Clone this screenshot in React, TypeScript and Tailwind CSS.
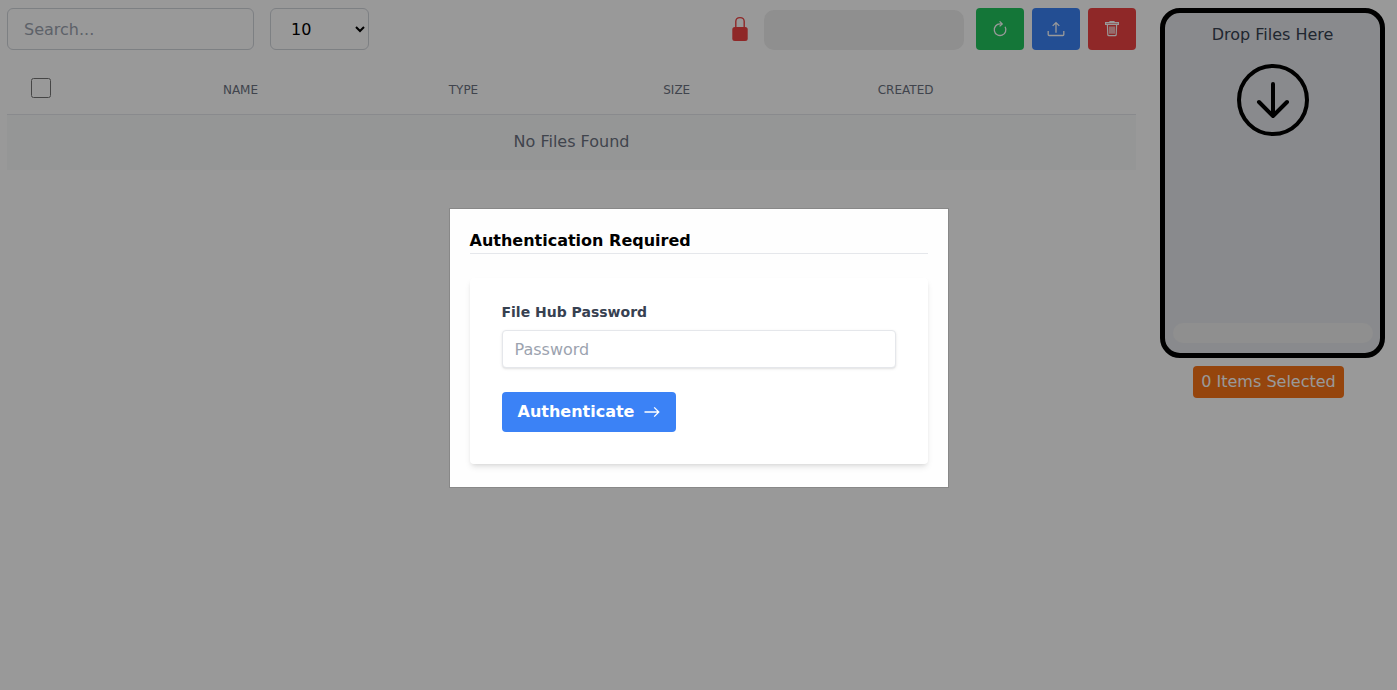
import React from "react";

function LockIcon() {
  return (
    <svg width="16" height="26" viewBox="0 0 16 26" aria-hidden="true">
      <path d="M3.8 11V5.6C3.8 3 5.6 1.6 8 1.6s4.2 1.4 4.2 4V11" fill="none" stroke="#ef4444" strokeWidth="1.4" />
      <rect x="0.3" y="11" width="15.4" height="14" rx="2.5" fill="#ef4444" />
    </svg>
  );
}

function ReloadIcon() {
  return (
    <svg width="16" height="16" viewBox="0 0 16 16" fill="none" stroke="#fff" strokeWidth="1.3" aria-hidden="true">
      <path d="M13.1 5.8A5.8 5.8 0 1 1 8 2.9h2" />
      <path d="M7.6 0.4L10.2 2.9L7.6 5.4" />
    </svg>
  );
}

function UploadIcon() {
  return (
    <svg width="18" height="16" viewBox="0 0 18 16" fill="none" stroke="#fff" strokeWidth="1.3" aria-hidden="true">
      <path d="M1.2 10v3.5q0 1 1 1h13.6q1 0 1-1V10" />
      <path d="M9 11.8V1.8M5.7 4.9L9 1.6l3.3 3.3" />
    </svg>
  );
}

function TrashIcon() {
  return (
    <svg width="16" height="16" viewBox="0 0 16 16" fill="none" stroke="#fff" strokeWidth="1.2" aria-hidden="true">
      <path d="M6 1.6V.6h4v1M1.6 1.6h12.8v1.8H1.6zM3.4 3.4l.4 10.2q.1 1 1 1h6.4q.9 0 1-1l.4-10.2" />
      <path d="M6 5.4v7.4M8 5.4v7.4M10 5.4v7.4" />
    </svg>
  );
}

function ArrowIcon() {
  return (
    <svg width="16" height="12" viewBox="0 0 16 12" fill="none" stroke="#fff" strokeWidth="1.3" aria-hidden="true">
      <path d="M0.5 6h14M10.2 1.4L14.8 6l-4.6 4.6" />
    </svg>
  );
}

function DropIcon() {
  return (
    <svg width="72" height="72" viewBox="0 0 72 72" fill="none" stroke="#000" strokeWidth="4" strokeLinecap="round" aria-hidden="true">
      <circle cx="36" cy="36" r="34" />
      <path d="M36 20v32M22 38l14 14l14-14" strokeLinejoin="round" />
    </svg>
  );
}

const tool = "flex h-[42px] w-12 items-center justify-center rounded";

export default function App() {
  return (
    <div className="min-h-screen bg-white font-['Verdana','DejaVu_Sans',sans-serif] text-base text-black">
      <div className="flex items-start gap-6 py-2 pr-3 pl-[7px]">
        <main className="min-w-0 flex-1">
          <div className="flex items-center">
            <input
              type="search"
              aria-label="Search"
              placeholder="Search..."
              className="h-[42px] w-[247px] rounded-md border border-[#d1d5db] bg-white px-4 placeholder:text-[#9ca3af]"
            />
            <select
              aria-label="Rows per page"
              defaultValue="10"
              className="ml-4 h-[42px] w-[99px] rounded-md border border-[#d1d5db] bg-white pl-4"
            >
              <option>10</option>
              <option>25</option>
              <option>50</option>
            </select>
            <div className="ml-auto flex items-center gap-2">
              <LockIcon />
              <div className="mr-1 ml-2 h-10 w-[200px] self-end rounded-[10px] bg-[#eeeeee]" />
              <button aria-label="Refresh" className={tool + " bg-[#22c55e]"}>
                <ReloadIcon />
              </button>
              <button aria-label="Upload" className={tool + " bg-[#3b82f6]"}>
                <UploadIcon />
              </button>
              <button aria-label="Delete" className={tool + " bg-[#ef4444]"}>
                <TrashIcon />
              </button>
            </div>
          </div>
          <table className="mt-3 w-full table-fixed">
            <thead>
              <tr className="h-[52px] border-b border-[#e5e7eb] text-left text-xs text-[#6b7280]">
                <th className="w-[17%] px-6">
                  <input type="checkbox" aria-label="Select all files" className="block size-5" />
                </th>
                <th className="w-[20%] px-6 pt-1 font-normal">NAME</th>
                <th className="w-[19%] px-6 pt-1 font-normal">TYPE</th>
                <th className="w-[19%] px-6 pt-1 font-normal">SIZE</th>
                <th className="px-6 pt-1 font-normal">CREATED</th>
              </tr>
            </thead>
            <tbody>
              <tr className="h-14 bg-[#f9fafb]">
                <td colSpan={5} className="text-center text-[#6b7280]">
                  No Files Found
                </td>
              </tr>
            </tbody>
          </table>
        </main>
        <aside className="flex w-[225px] shrink-0 flex-col gap-2">
          <section className="flex h-[350px] flex-col items-center rounded-[20px] border-5 border-black bg-[#e5e7eb] px-2.5 pt-2.5 pb-2.5">
            <h2 className="text-[#374151]">Drop Files Here</h2>
            <div className="mt-[17px]">
              <DropIcon />
            </div>
            <div className="mt-auto h-5 w-[200px] rounded-full bg-[#eeeeee]" />
          </section>
          <div className="flex justify-center pr-2">
            <span className="rounded bg-[#f97316] px-2 py-1 text-white">0 Items Selected</span>
          </div>
        </aside>
      </div>

      <div className="fixed inset-0 flex items-center justify-center bg-black/40 pt-1.5">
        <div role="dialog" aria-labelledby="auth-title" className="w-[500px] border border-[#888888] bg-[#fefefe] px-5 pt-5 pb-[23px]">
          <h1 id="auth-title" className="border-b border-[#e5e7eb] font-bold">
            Authentication Required
          </h1>
          <form className="mt-6 rounded bg-white px-8 pt-6 pb-8 shadow-md" onSubmit={(e) => e.preventDefault()}>
            <label htmlFor="password" className="mb-2 block text-sm font-bold text-[#374151]">
              File Hub Password
            </label>
            <input
              id="password"
              type="password"
              placeholder="Password"
              className="mb-6 block h-[38px] w-full rounded border border-[#e5e7eb] bg-white px-3 shadow placeholder:text-[#9ca3af]"
            />
            <button className="flex h-10 items-center gap-2.5 rounded bg-[#3b82f6] px-4 font-bold text-white">
              Authenticate
              <ArrowIcon />
            </button>
          </form>
        </div>
      </div>
    </div>
  );
}
